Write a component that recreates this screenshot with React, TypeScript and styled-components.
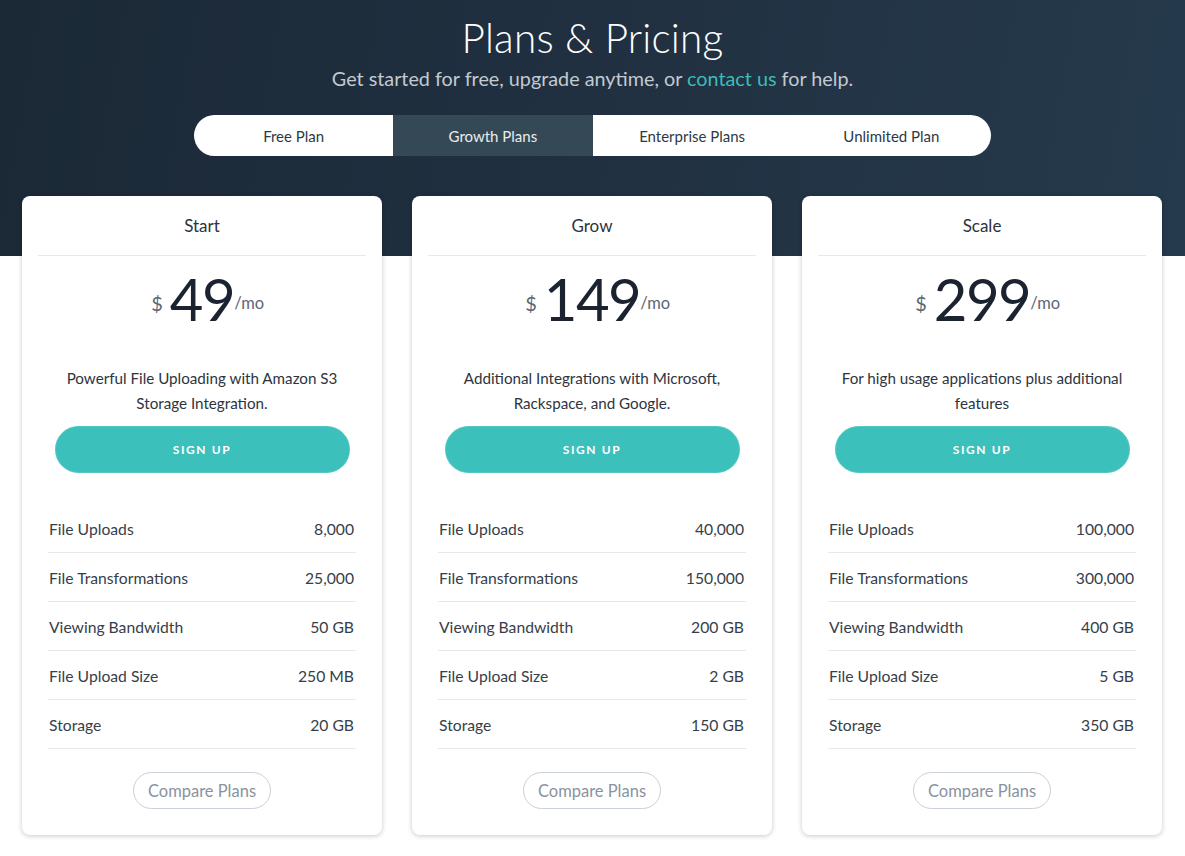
import React from "react";
import styled, { createGlobalStyle } from "styled-components";

const Global = createGlobalStyle`
  html, body { margin: 0; padding: 0; }
  body {
    font-family: Lato, "Open Sans", "Liberation Sans", sans-serif;
    background: #fff;
    -webkit-font-smoothing: antialiased;
  }
  * { box-sizing: border-box; }
`;

const Page = styled.div`
  width: 1185px;
  min-height: 856px;
  background:
    linear-gradient(100deg, #1b2936 0%, #213142 55%, #253a4c 100%) top left / 100% 256px no-repeat,
    #ffffff;
  padding-top: 16px;
  display: flex;
  flex-direction: column;
  align-items: center;
`;

const Title = styled.h1`
  margin: 0;
  font-size: 40.5px;
  line-height: 44px;
  font-weight: 300;
  color: #ffffff;
  letter-spacing: 0.2px;
`;

const Subtitle = styled.p`
  margin: 6px 0 0;
  font-size: 19.8px;
  line-height: 24px;
  font-weight: 400;
  color: #c3cad0;
`;

const Link = styled.a`
  color: #3cbdb5;
  text-decoration: none;
`;

const Tabs = styled.div`
  margin-top: 25px;
  width: 797px;
  height: 41px;
  background: #fff;
  border-radius: 21px;
  display: grid;
  grid-template-columns: repeat(4, 1fr);
  overflow: hidden;
`;

const Tab = styled.div<{ $active?: boolean }>`
  display: flex;
  align-items: center;
  justify-content: center;
  font-size: 15px;
  color: ${(p) => (p.$active ? "#e9edf0" : "#2e3944")};
  background: ${(p) => (p.$active ? "#344955" : "transparent")};
`;

const Cards = styled.div`
  margin-top: 40px;
  display: flex;
  gap: 30px;
  justify-content: flex-start;
  padding-left: 22px;
  width: 100%;
`;

const Card = styled.div`
  width: 360px;
  background: #fff;
  border-radius: 8px;
  box-shadow: 0 1px 5px rgba(0, 0, 0, 0.22);
  display: flex;
  flex-direction: column;
  align-items: center;
  padding-bottom: 26px;
`;

const CardHeader = styled.div`
  align-self: stretch;
  margin: 0 16px;
  height: 60px;
  border-bottom: 1px solid #e6e9ec;
  display: flex;
  align-items: center;
  justify-content: center;
  font-size: 17px;
  color: #2c333c;
`;

const PriceRow = styled.div`
  margin-top: 14px;
  align-self: stretch;
  display: grid;
  grid-template-columns: 1fr auto 1fr;
  align-items: start;
`;

const Dollar = styled.span`
  justify-self: end;
  font-size: 20px;
  line-height: 1;
  margin-top: 23px;
  margin-right: 7px;
  color: #5b6774;
`;

const Amount = styled.span`
  font-size: 58px;
  line-height: 1;
  font-weight: 400;
  color: #1b2331;
  letter-spacing: -1.5px;
`;

const Per = styled.span`
  justify-self: start;
  font-size: 16.5px;
  line-height: 1;
  margin-top: 25px;
  color: #5b6774;
`;

const Description = styled.p`
  margin: 38px 0 0;
  height: 50px;
  padding: 0 30px;
  text-align: center;
  font-size: 15.2px;
  line-height: 25px;
  color: #2d3440;
`;

const SignUp = styled.button`
  margin-top: 10px;
  width: 295px;
  height: 47px;
  border: none;
  border-radius: 24px;
  background: #3cc0bb;
  box-shadow: inset 0 0 0 1px rgba(255, 255, 255, 0.12);
  color: #fff;
  font-family: inherit;
  font-size: 12px;
  font-weight: 700;
  letter-spacing: 1.6px;
`;

const Features = styled.ul`
  list-style: none;
  margin: 31px 26px 0;
  padding: 0;
  align-self: stretch;
`;

const Feature = styled.li`
  height: 49px;
  display: flex;
  align-items: center;
  justify-content: space-between;
  padding: 2px 2px 0 1px;
  border-bottom: 1px solid #e6e9ec;
  font-size: 15.7px;
  color: #363e4a;
`;

const Compare = styled.button`
  margin-top: 23px;
  width: 138px;
  height: 37px;
  border: 1px solid #c9d0d8;
  border-radius: 19px;
  background: #fff;
  color: #8a939d;
  font-family: inherit;
  font-size: 16.5px;
  padding: 0;
`;

type Plan = {
  name: string;
  price: string;
  desc: string;
  values: string[];
};

const labels = [
  "File Uploads",
  "File Transformations",
  "Viewing Bandwidth",
  "File Upload Size",
  "Storage",
];

const plans: Plan[] = [
  {
    name: "Start",
    price: "49",
    desc: "Powerful File Uploading with Amazon S3 Storage Integration.",
    values: ["8,000", "25,000", "50 GB", "250 MB", "20 GB"],
  },
  {
    name: "Grow",
    price: "149",
    desc: "Additional Integrations with Microsoft, Rackspace, and Google.",
    values: ["40,000", "150,000", "200 GB", "2 GB", "150 GB"],
  },
  {
    name: "Scale",
    price: "299",
    desc: "For high usage applications plus additional features",
    values: ["100,000", "300,000", "400 GB", "5 GB", "350 GB"],
  },
];

const tabs = ["Free Plan", "Growth Plans", "Enterprise Plans", "Unlimited Plan"];

export default function App() {
  return (
    <>
      <Global />
      <Page>
        <Title>Plans &amp; Pricing</Title>
        <Subtitle>
          Get started for free, upgrade anytime, or <Link href="#">contact us</Link> for help.
        </Subtitle>
        <Tabs>
          {tabs.map((t) => (
            <Tab key={t} $active={t === "Growth Plans"}>
              {t}
            </Tab>
          ))}
        </Tabs>
        <Cards>
          {plans.map((p) => (
            <Card key={p.name}>
              <CardHeader>{p.name}</CardHeader>
              <PriceRow>
                <Dollar>$</Dollar>
                <Amount>{p.price}</Amount>
                <Per>/mo</Per>
              </PriceRow>
              <Description>{p.desc}</Description>
              <SignUp>SIGN UP</SignUp>
              <Features>
                {labels.map((l, i) => (
                  <Feature key={l}>
                    <span>{l}</span>
                    <span>{p.values[i]}</span>
                  </Feature>
                ))}
              </Features>
              <Compare>Compare Plans</Compare>
            </Card>
          ))}
        </Cards>
      </Page>
    </>
  );
}
